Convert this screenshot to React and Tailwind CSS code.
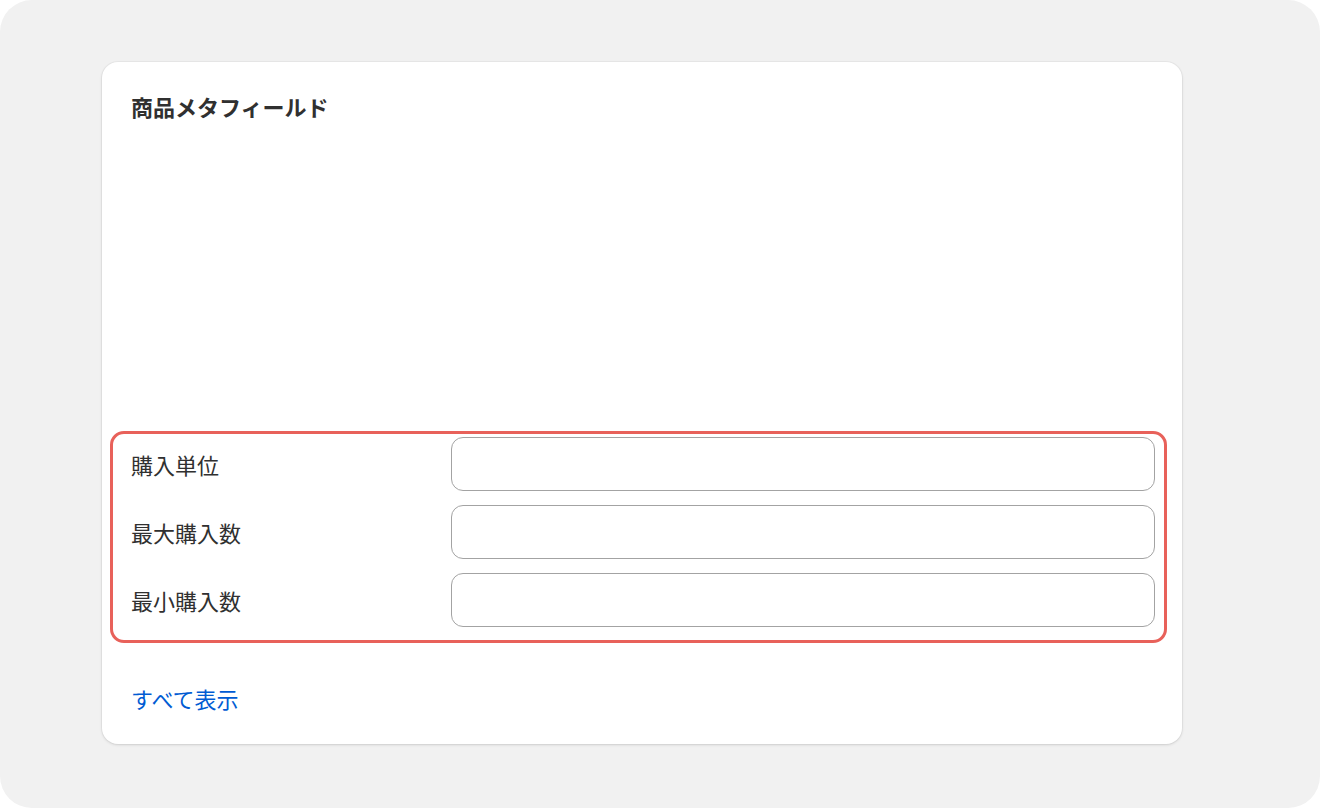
import React from 'react';

const fields = ['購入単位', '最大購入数', '最小購入数'];

export default function App() {
  return (
    <div
      className="w-[1320px] h-[808px] bg-white"
      style={{ fontFamily: '"Noto Sans CJK JP", "Noto Sans", sans-serif' }}
    >
      <div className="w-full h-full bg-[#f1f1f1] rounded-[32px] pt-[62px] pl-[102px]">
        <div className="w-[1080px] h-[682px] bg-white rounded-[16px] shadow-[0_1px_3px_rgba(0,0,0,0.12),0_0_0_1px_rgba(0,0,0,0.03)] flex flex-col">
          <h2 className="pt-[30px] pl-[29px] text-[22px] leading-[28px] font-bold text-[#303030]">
            商品メタフィールド
          </h2>

          {/* highlighted metafield block */}
          <div className="mt-[311px] ml-[8px] mr-[15px] border-[3px] border-[#e8615a] rounded-[14px] pt-[3px] pb-[13px] pl-[18px] pr-[9px] flex flex-col gap-[14px]">
            {fields.map((label) => (
              <div key={label} className="flex items-center">
                <label className="w-[320px] text-[22px] leading-[28px] font-normal text-[#303030]">
                  {label}
                </label>
                <input
                  type="text"
                  className="flex-1 h-[54px] rounded-[12px] border-[1.5px] border-[#a3a3a3] bg-white outline-none"
                />
              </div>
            ))}
          </div>

          <a className="mt-[41px] ml-[29px] text-[22px] leading-[28px] font-normal text-[#005bd3] w-fit cursor-pointer">
            すべて表示
          </a>
        </div>
      </div>
    </div>
  );
}
